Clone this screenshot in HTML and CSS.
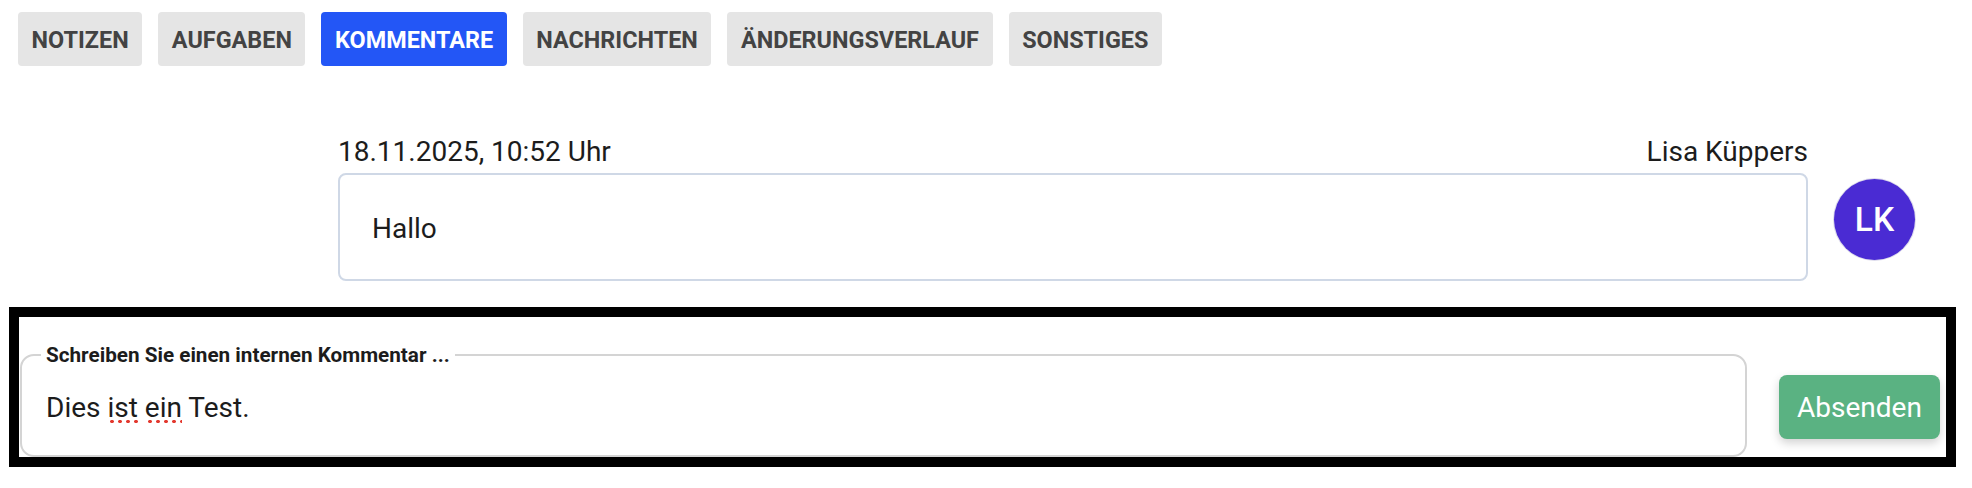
FILE: index.html
```html
<!DOCTYPE html>
<html lang="de">
<head>
<meta charset="utf-8">
<title>Kommentare</title>
<link rel="stylesheet" href="styles.css">
</head>
<body>
<nav class="tabs">
  <button class="tab">NOTIZEN</button>
  <button class="tab">AUFGABEN</button>
  <button class="tab tab-active">KOMMENTARE</button>
  <button class="tab">NACHRICHTEN</button>
  <button class="tab">ÄNDERUNGSVERLAUF</button>
  <button class="tab">SONSTIGES</button>
</nav>

<section class="comment-row">
  <div class="comment-main">
    <div class="comment-head">
      <span class="comment-date">18.11.2025, 10:52 Uhr</span>
      <span class="comment-author">Lisa Küppers</span>
    </div>
    <div class="comment-box">Hallo</div>
  </div>
  <div class="avatar">LK</div>
</section>

<section class="compose">
  <fieldset class="compose-field">
    <legend class="compose-legend">Schreiben Sie einen internen Kommentar ...</legend>
    <div class="compose-text">Dies <span class="spell">ist</span> <span class="spell">ein</span> Test.</div>
  </fieldset>
  <button class="send">Absenden</button>
</section>
</body>
</html>
```

FILE: styles.css
```css
html, body {
  margin: 0;
  padding: 0;
  background: #ffffff;
}

body {
  font-family: Roboto, "Liberation Sans", Arial, sans-serif;
  color: #1c1c1c;
  width: 1972px;
}

.tabs {
  display: flex;
  gap: 16px;
  padding: 12px 0 0 18px;
}

.tab {
  font-family: Roboto, "Liberation Sans", Arial, sans-serif;
  font-weight: 700;
  font-size: 23.4px;
  line-height: 26px;
  color: #434343;
  background: #e5e5e5;
  border: 0;
  border-radius: 4px;
  padding: 15px 13.6px 13px;
  margin: 0;
}

.tab-active {
  background: #2356f6;
  color: #ffffff;
}

.comment-row {
  display: flex;
  gap: 26px;
  margin: 69px 57px 0 338px;
}

.comment-main {
  flex: 1;
  display: flex;
  flex-direction: column;
  gap: 5px;
}

.comment-head {
  display: flex;
  justify-content: space-between;
  font-size: 28px;
  line-height: 33px;
  color: #1c1c1c;
}

.comment-box {
  border: 2px solid #cfd8e6;
  border-radius: 8px;
  padding: 37px 31px 34px 32px;
  font-size: 28px;
  line-height: 33px;
  color: #1c1c1c;
}

.avatar {
  flex: 0 0 auto;
  width: 81px;
  height: 81px;
  margin-top: 44px;
  border-radius: 50%;
  background: #4a2bd3;
  box-shadow: 0 0 0 1px #dedcec;
  color: #ffffff;
  font-size: 33.6px;
  font-weight: 500;
  display: flex;
  align-items: center;
  justify-content: center;
}

.compose {
  display: flex;
  align-items: stretch;
  gap: 32px;
  margin: 26px 16px 0 9px;
  border: 10px solid #000000;
  padding: 26px 6px 0 1px;
  height: 114px;
  overflow: hidden;
}

.compose-field {
  flex: 1;
  margin: 0;
  border: 2px solid #d4d4d4;
  border-radius: 14px;
  padding: 24px 23px 0 24px;
  min-width: 0;
}

.compose-legend {
  font-size: 20.7px;
  line-height: 24px;
  font-weight: 700;
  color: #1c1c1c;
  padding: 0 5px;
  margin-left: -5px;
}

.compose-text {
  font-size: 28px;
  line-height: 33px;
  color: #1c1c1c;
}

.spell {
  background-image: radial-gradient(circle, #e3392f 1.6px, rgba(227, 57, 47, 0) 2px);
  background-size: 8px 5px;
  background-repeat: repeat-x;
  background-position: 1px calc(100% - 0.5px);
}

.send {
  flex: 0 0 auto;
  align-self: flex-end;
  margin: 0 0 18px 0;
  width: 161px;
  height: 64px;
  border: 0;
  border-radius: 8px;
  background: #5ab282;
  color: #ffffff;
  font-family: Roboto, "Liberation Sans", Arial, sans-serif;
  font-size: 28px;
  font-weight: 400;
  padding: 0;
  box-shadow: 0 4px 10px rgba(0, 0, 0, 0.18);
}
```
